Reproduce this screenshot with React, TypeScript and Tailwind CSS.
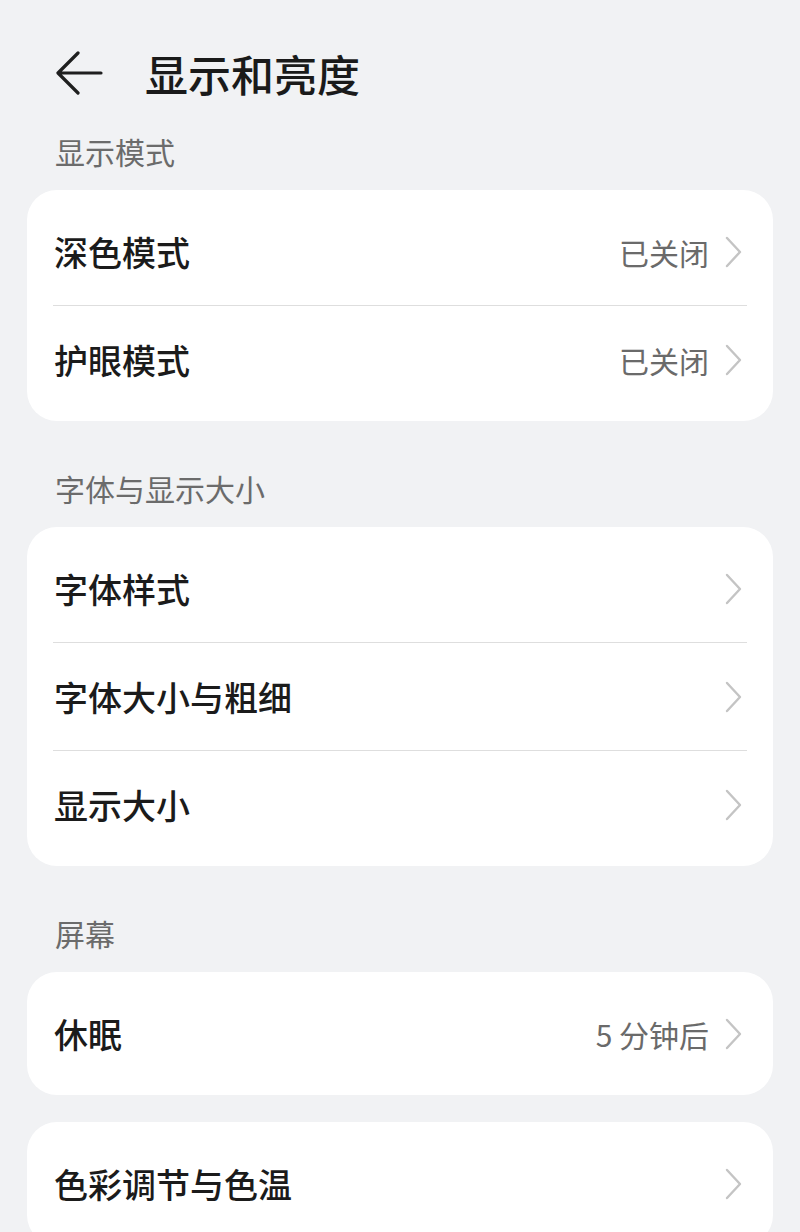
const font = { fontFamily: '"Noto Sans CJK SC", "Noto Sans", sans-serif' };

type Row = { label: string; value?: string };

const sections: { title: string; cards: Row[][] }[] = [
  {
    title: "显示模式",
    cards: [[{ label: "深色模式", value: "已关闭" }, { label: "护眼模式", value: "已关闭" }]],
  },
  {
    title: "字体与显示大小",
    cards: [[{ label: "字体样式" }, { label: "字体大小与粗细" }, { label: "显示大小" }]],
  },
  {
    title: "屏幕",
    cards: [[{ label: "休眠", value: "5 分钟后" }], [{ label: "色彩调节与色温" }]],
  },
];

function Chevron() {
  return (
    <svg width="18" height="32" viewBox="0 0 18 32" fill="none" className="shrink-0">
      <path d="M2 2 L15 16 L2 30" stroke="#c4c4c4" strokeWidth="2.4" strokeLinecap="round" strokeLinejoin="round" />
    </svg>
  );
}

function BackArrow() {
  return (
    <svg width="48" height="44" viewBox="0 0 48 44" fill="none">
      <path d="M46 22 H4 M23 2 L3 22 L23 42" stroke="#1f1f1f" strokeWidth="3.2" strokeLinecap="round" strokeLinejoin="round" />
    </svg>
  );
}

function Card({ rows }: { rows: Row[] }) {
  return (
    <div className="bg-white rounded-[30px] py-[8px]">
      {rows.map((r, i) => (
        <div key={r.label}>
          {i > 0 && <div className="mx-[26px] h-px bg-[#dedede]" />}
          <div className="h-[107px] flex items-center pl-[27px] pr-[30px]">
            <span className="flex-1 text-[34px] font-medium text-[#1b1b1b] leading-none">{r.label}</span>
            {r.value && (
              <span className="text-[30px] text-[#6a6a6a] leading-none mr-[16px]">{r.value}</span>
            )}
            <Chevron />
          </div>
        </div>
      ))}
    </div>
  );
}

export default function App() {
  return (
    <div className="w-[800px] h-[1232px] overflow-hidden bg-[#f1f2f4] px-[27px]" style={font}>
      {/* header */}
      <div className="pt-[45px] h-[101px] flex items-center">
        <div className="ml-[28px] w-[90px] flex items-center">
          <BackArrow />
        </div>
        <h1 className="text-[43px] font-medium text-[#1a1a1a] leading-none">显示和亮度</h1>
      </div>

      {sections.map((s, si) => (
        <div key={s.title} className={si === 0 ? "pt-[30px]" : "pt-[47px]"}>
          <div className="h-[40px] flex items-center pl-[28px] text-[30px] text-[#6b6b6b] mb-[19px] leading-none">
            {s.title}
          </div>
          <div className="flex flex-col gap-[27px]">
            {s.cards.map((c, ci) => (
              <Card key={ci} rows={c} />
            ))}
          </div>
        </div>
      ))}
    </div>
  );
}
